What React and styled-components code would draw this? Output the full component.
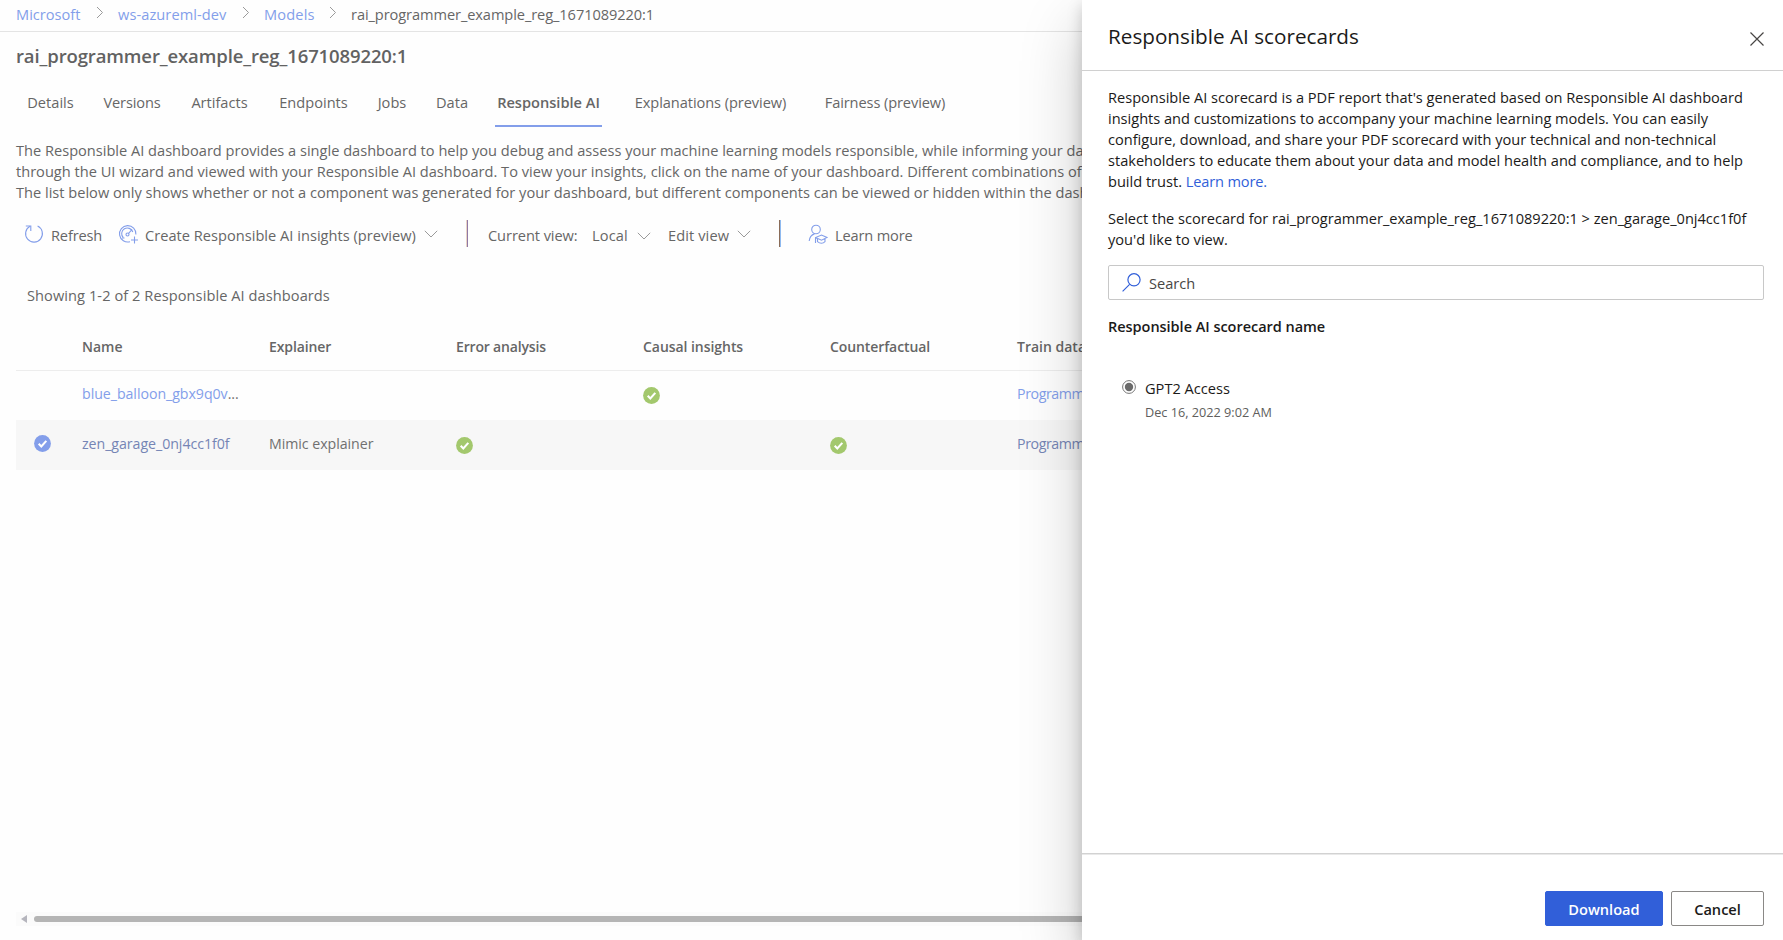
import React from 'react';
import styled, { createGlobalStyle } from 'styled-components';

const GlobalStyle = createGlobalStyle`
  * { box-sizing: border-box; }
  html, body { margin: 0; height: 100%; overflow: hidden; }
  body {
    background: #fefefe;
    color: #666;
    font-family: "Open Sans", "Noto Sans", sans-serif;
    font-size: 14.6px;
  }
`;

const Page = styled.div`
  position: relative;
  width: 1783px;
  height: 940px;
  overflow: hidden;
`;

const Main = styled.main`
  display: flex;
  flex-direction: column;
  width: 1082px;
  height: 940px;
  overflow: hidden;
  white-space: nowrap;
`;

const Breadcrumbs = styled.nav`
  display: flex;
  align-items: flex-start;
  height: 32px;
  padding-left: 16px;
  line-height: 29px;
  border-bottom: 1px solid #e4e4e4;
`;

const Crumb = styled.span`
  width: ${(p) => p.$width}px;
  letter-spacing: ${(p) => p.$track || 0}px;
  color: ${(p) => (p.$link ? '#839eea' : '#666')};
`;

const CrumbArrow = styled.svg`
  width: 8px;
  height: 13px;
  margin: 6px 14px 0 ${(p) => p.$before}px;
  flex: none;
`;

const Title = styled.h1`
  margin: 0;
  padding-left: 16px;
  font-size: 18.5px;
  font-weight: 600;
  line-height: 47px;
  height: 48px;
  letter-spacing: -0.12px;
  color: #626262;
`;

const Tabs = styled.div`
  display: flex;
  padding-left: 16px;
`;

const Tab = styled.div`
  width: ${(p) => p.$width}px;
  margin-right: ${(p) => p.$gap}px;
  height: 47px;
  line-height: 45px;
  text-align: center;
  letter-spacing: ${(p) => p.$track || 0}px;
  font-weight: ${(p) => (p.$active ? 600 : 400)};
  border-bottom: 2px solid ${(p) => (p.$active ? '#839eea' : 'transparent')};
`;

const Intro = styled.p`
  margin: 13px 0 0;
  padding-left: 16px;
  line-height: 21px;
`;

const Toolbar = styled.div`
  display: flex;
  align-items: center;
  height: 32px;
  margin-top: 16px;
  padding-left: 24px;
`;

const ToolLabel = styled.span`
  width: ${(p) => p.$width}px;
  margin-left: ${(p) => p.$before}px;
  line-height: 32px;
  letter-spacing: ${(p) => p.$track || 0}px;
`;

const ToolIcon = styled.svg`
  width: 20px;
  height: 20px;
  margin-left: ${(p) => p.$before || 0}px;
  margin-bottom: 2px;
  flex: none;
  fill: none;
  stroke: #839eea;
  stroke-width: 1.1;
`;

const Chevron = styled.svg`
  width: 14px;
  height: 8px;
  margin-left: ${(p) => p.$before}px;
  margin-bottom: ${(p) => p.$lift || 0}px;
  flex: none;
`;

const Divider = styled.i`
  width: 2px;
  height: 27px;
  margin: 0 0 3px ${(p) => p.$before}px;
  background: linear-gradient(90deg, ${(p) => p.$from} 50%, ${(p) => p.$to} 50%);
`;

const Count = styled.div`
  margin-top: 28px;
  padding-left: 27px;
  line-height: 32px;
  letter-spacing: 0.07px;
`;

const Table = styled.div`
  margin: 11px 0 0 16px;
`;

const Row = styled.div`
  display: grid;
  grid-template-columns: 66px repeat(5, 187px) 1fr;
  height: ${(p) => (p.$selected ? 50 : 49)}px;
  line-height: ${(p) => (p.$head ? 50 : p.$selected ? 48 : 46)}px;
  border-bottom: ${(p) => (p.$head ? '1px solid #ededed' : 'none')};
  background: ${(p) => (p.$selected ? '#f7f7f7' : 'transparent')};
`;

const HeadCell = styled.div`
  font-size: 14px;
  font-weight: 600;
  letter-spacing: ${(p) => p.$track || 0}px;
`;

const Cell = styled.div`
  font-size: 14.2px;
  letter-spacing: ${(p) => p.$track || -0.05}px;
  color: #707070;
`;

const Link = styled.a`
  color: ${(p) => (p.$dim ? '#7585b5' : '#839eea')};
`;

const Badge = styled.svg`
  display: block;
  width: 17px;
  height: 17px;
  margin: ${(p) => p.$top}px 0 0 ${(p) => p.$left || 0}px;
`;

const ScrollBar = styled.div`
  display: flex;
  align-items: center;
  height: 14px;
  margin: auto 0 14px 16px;
  padding-left: 5px;
  background: #fbfbfb;
`;

const ScrollThumb = styled.div`
  flex: 1;
  height: 6px;
  margin-left: 7px;
  border-radius: 3px 0 0 3px;
  background: #b5b5b5;
`;

const Drawer = styled.aside`
  position: absolute;
  top: 0;
  right: 0;
  width: 701px;
  height: 940px;
  display: flex;
  flex-direction: column;
  background: #fff;
  color: #1b1a19;
  white-space: nowrap;
  box-shadow: 0 25.6px 57.6px rgba(0, 0, 0, 0.22), 0 4.8px 14.4px rgba(0, 0, 0, 0.18);
`;

const DrawerHead = styled.header`
  display: flex;
  justify-content: space-between;
  height: 71px;
  padding: 0 19px 0 26px;
  border-bottom: 1px solid #d0d0d0;
`;

const DrawerTitle = styled.h2`
  margin: 0;
  font-size: 20.7px;
  font-weight: 400;
  line-height: 73px;
`;

const CloseIcon = styled.svg`
  width: 14px;
  height: 14px;
  margin-top: 32px;
`;

const DrawerBody = styled.div`
  flex: 1;
  padding: 16px 19px 0 26px;
`;

const Text = styled.p`
  margin: 0 0 ${(p) => p.$after}px;
  line-height: 21px;
  letter-spacing: -0.01px;
`;

const BlueLink = styled.a`
  color: #315fd9;
  letter-spacing: -0.15px;
`;

const SearchBox = styled.div`
  display: flex;
  align-items: center;
  height: 35px;
  padding-left: 13px;
  border: 1px solid #c8c8c8;
  border-radius: 2px;
  color: #484644;
`;

const SearchText = styled.span`
  margin: 0 0 0 8px;
`;

const ListHead = styled.div`
  margin-top: 16px;
  font-size: 14.5px;
  font-weight: 600;
  line-height: 21px;
  letter-spacing: -0.03px;
`;

const Option = styled.label`
  display: flex;
  gap: 9px;
  margin-top: 39px;
  padding-left: 14px;
`;

const Radio = styled.svg`
  width: 14px;
  height: 14px;
  margin-top: 4px;
`;

const OptionName = styled.div`
  line-height: 24px;
`;

const OptionDate = styled.div`
  font-size: 12.7px;
  line-height: 24px;
  color: #605e5c;
`;

const Footer = styled.footer`
  display: flex;
  justify-content: flex-end;
  gap: 8px;
  height: 87px;
  padding: 37px 19px 0;
  border-top: 1px solid #d2d2d2;
  box-shadow: inset 0 1px 0 #e9e9e9;
`;

const Button = styled.button`
  width: ${(p) => p.$width}px;
  height: 35px;
  padding: 1px 0 0;
  border: 1px solid ${(p) => (p.$primary ? '#315fd9' : '#8a8886')};
  border-radius: 2px;
  background: ${(p) => (p.$primary ? '#315fd9' : '#fff')};
  color: ${(p) => (p.$primary ? '#fff' : '#1b1a19')};
  font: 600 14.6px "Open Sans", sans-serif;
`;

const Arrow = ({ before }) => (
  <CrumbArrow $before={before} viewBox="0 0 8 13">
    <path d="M1 1l5.500 5.500L1 12" fill="none" stroke="#9a9a9a" />
  </CrumbArrow>
);

const Down = ({ before, lift }) => (
  <Chevron $before={before} $lift={lift} viewBox="0 0 14 8">
    <path d="M.8 .8L7 7l6.200-6.200" fill="none" stroke="#9a9a9a" />
  </Chevron>
);

const Check = ({ color, top, left }) => (
  <Badge $top={top} $left={left} viewBox="0 0 17 17">
    <circle cx="8.500" cy="8.500" r="8.400" fill={color} />
    <path d="M4.700 8.800l2.600 2.600L12.300 5.900" fill="none" stroke="#fff" strokeWidth="2.100" />
  </Badge>
);

const Good = ({ on, top = 17 }) => <Cell>{on && <Check color="#a3c86d" top={top} />}</Cell>;

export default function App() {
  return (
    <Page>
      <GlobalStyle />
      <Main>
        <Breadcrumbs>
          <Crumb $link $width={65}>Microsoft</Crumb>
          <Arrow before={15} />
          <Crumb $link $width={110} $track={0.08}>ws-azureml-dev</Crumb>
          <Arrow before={14} />
          <Crumb $link $width={51} $track={0.15}>Models</Crumb>
          <Arrow before={14} />
          <Crumb $width={304} $track={-0.08}>rai_programmer_example_reg_1671089220:1</Crumb>
        </Breadcrumbs>
        <Title>rai_programmer_example_reg_1671089220:1</Title>
        <Tabs>
          <Tab $width={69} $gap={9}>Details</Tab>
          <Tab $width={76} $gap={9} $track={-0.15}>Versions</Tab>
          <Tab $width={81} $gap={0}>Artifacts</Tab>
          <Tab $width={107} $gap={0}>Endpoints</Tab>
          <Tab $width={50} $gap={8}>Jobs</Tab>
          <Tab $width={54} $gap={16}>Data</Tab>
          <Tab $active $width={107} $gap={22}>Responsible AI</Tab>
          <Tab $width={173} $gap={0} $track={-0.07}>Explanations (preview)</Tab>
          <Tab $width={176} $gap={0} $track={-0.1}>Fairness (preview)</Tab>
        </Tabs>
        <Intro>
          The Responsible AI dashboard provides a single dashboard to help you debug and assess your machine learning models responsible, while informing your data
          <br />
          through the UI wizard and viewed with your Responsible AI dashboard. To view your insights, click on the name of your dashboard. Different combinations of
          <br />
          The list below only shows whether or not a component was generated for your dashboard, but different components can be viewed or hidden within the dash
        </Intro>
        <Toolbar>
          <ToolIcon viewBox="0 0 20 20">
            <path d="M6 2.300A8.400 8.400 0 1 0 13.600 2.100" />
            <path d="M1.800 2h5v5" />
          </ToolIcon>
          <ToolLabel $before={7} $width={51} $track={-0.15}>Refresh</ToolLabel>
          <ToolIcon $before={16} viewBox="0 0 20 20">
            <path d="M12 17.700A8.200 8.200 0 1 1 17.900 10.500" />
            <path d="M5.300 13.700A5.700 5.700 0 1 1 14.800 8" />
            <circle cx="9.500" cy="10.500" r="1.500" />
            <path d="M10.600 9.400L14 5.500M16.500 12.500v7M13 16h7M4 14h2.500" />
          </ToolIcon>
          <ToolLabel $before={7} $width={271} $track={0.02}>Create Responsible AI insights (preview)</ToolLabel>
          <Down before={8} lift={2} />
          <Divider $before={28} $from="#e9d3c5" $to="#8f78a5" />
          <ToolLabel $before={20} $width={90} $track={-0.07}>Current view:</ToolLabel>
          <ToolLabel $before={14} $width={37} $track={0.15}>Local</ToolLabel>
          <Down before={8} lift={-2} />
          <ToolLabel $before={17} $width={61} $track={0.1}>Edit view</ToolLabel>
          <Down before={8} lift={2} />
          <Divider $before={28} $from="#8a6c58" $to="#8fbaf0" />
          <ToolIcon $before={27} viewBox="0 0 20 20">
            <circle cx="8" cy="5.500" r="4.300" />
            <path d="M1.200 17c.4-3.700 2.300-6.200 5.300-7.100M7.500 19v-5.500l6-2.500 5.500 2.500-5.500 2.700-6-2.700M9.500 15v2.600c2.400 2 5.600 2 7.500 0V15" />
          </ToolIcon>
          <ToolLabel $before={7} $width={78} $track={-0.15}>Learn more</ToolLabel>
        </Toolbar>
        <Count>Showing 1-2 of 2 Responsible AI dashboards</Count>
        <Table>
          <Row $head>
            <span />
            <HeadCell>Name</HeadCell>
            <HeadCell $track={-0.1}>Explainer</HeadCell>
            <HeadCell $track={-0.17}>Error analysis</HeadCell>
            <HeadCell $track={-0.05}>Causal insights</HeadCell>
            <HeadCell $track={-0.1}>Counterfactual</HeadCell>
            <HeadCell>Train data</HeadCell>
          </Row>
          <Row>
            <span />
            <Cell><Link>blue_balloon_gbx9q0v</Link>...</Cell>
            <Cell />
            <Good />
            <Good on top={16} />
            <Good />
            <Cell $track={-0.4}><Link>Programm</Link></Cell>
          </Row>
          <Row $selected>
            <Check color="#839eea" top={15} left={18} />
            <Cell><Link $dim>zen_garage_0nj4cc1f0f</Link></Cell>
            <Cell>Mimic explainer</Cell>
            <Good on />
            <Good />
            <Good on />
            <Cell $track={-0.4}><Link $dim>Programm</Link></Cell>
          </Row>
        </Table>
        <ScrollBar>
          <svg width="6" height="8" viewBox="0 0 6 8"><path d="M6 0v8L0 4z" fill="#b5b5bd" /></svg>
          <ScrollThumb />
        </ScrollBar>
      </Main>
      <Drawer>
        <DrawerHead>
          <DrawerTitle>Responsible AI scorecards</DrawerTitle>
          <CloseIcon viewBox="0 0 14 14">
            <path d="M.5 .5l13 13M13.500 .5l-13 13" stroke="#484644" strokeWidth="1.200" />
          </CloseIcon>
        </DrawerHead>
        <DrawerBody>
          <Text $after={16}>
            Responsible AI scorecard is a PDF report that's generated based on Responsible AI dashboard
            <br />
            insights and customizations to accompany your machine learning models. You can easily
            <br />
            configure, download, and share your PDF scorecard with your technical and non-technical
            <br />
            stakeholders to educate them about your data and model health and compliance, and to help
            <br />
            build trust. <BlueLink>Learn more.</BlueLink>
          </Text>
          <Text $after={15}>
            Select the scorecard for rai_programmer_example_reg_1671089220:1 &gt; zen_garage_0nj4cc1f0f
            <br />
            you'd like to view.
          </Text>
          <SearchBox>
            <svg width="19" height="19" viewBox="0 0 19 19" fill="none" stroke="#315fd9" strokeWidth="1.200">
              <circle cx="12" cy="6.800" r="6.100" />
              <path d="M7.600 11.300L.6 18.300" />
            </svg>
            <SearchText>Search</SearchText>
          </SearchBox>
          <ListHead>Responsible AI scorecard name</ListHead>
          <Option>
            <Radio viewBox="0 0 14 14">
              <circle cx="7" cy="7" r="6.400" fill="#fff" stroke="#767676" />
              <circle cx="7" cy="7" r="4.200" fill="#6a6a6a" />
            </Radio>
            <div>
              <OptionName>GPT2 Access</OptionName>
              <OptionDate>Dec 16, 2022 9:02 AM</OptionDate>
            </div>
          </Option>
        </DrawerBody>
        <Footer>
          <Button $primary $width={118}>Download</Button>
          <Button $width={93}>Cancel</Button>
        </Footer>
      </Drawer>
    </Page>
  );
}
